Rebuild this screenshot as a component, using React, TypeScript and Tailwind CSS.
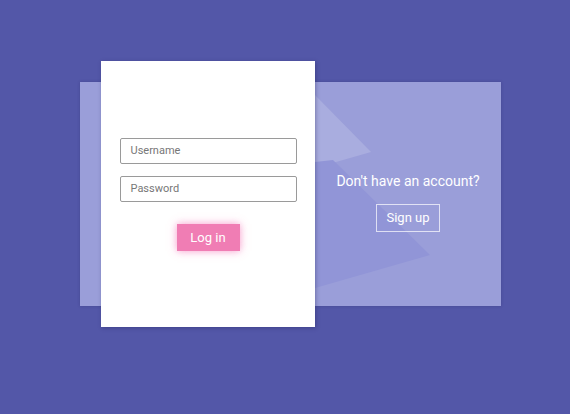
export default function App() {
  return (
    <div
      className="min-h-[414px] w-full bg-[#5357a8] pt-[82px] pl-[80px]"
      style={{ fontFamily: 'Roboto, "Liberation Sans", sans-serif' }}
    >
      <div className="relative flex h-[224px] w-[421px] bg-[#9a9ed9] shadow-[0_0_3px_rgba(40,40,100,0.3)]">
        <svg
          className="absolute inset-0"
          width="421"
          height="224"
          viewBox="0 0 421 224"
        >
          <polygon points="235,13 291,70 235,86" fill="#a9addf" />
          <polygon points="235,80 253,78 350,173 235,206" fill="#9195d7" />
        </svg>

        <div className="relative z-10 ml-[21px] -mt-[21px] flex h-[266px] w-[214px] shrink-0 flex-col items-center bg-white pt-[77px] shadow-[1px_1px_4px_rgba(30,30,80,0.35)]">
          <div className="flex h-[26px] w-[177px] items-center rounded-[2px] border border-[#9a9a9a] px-[10px] pt-[1px] text-[11px] text-[#777]">
            Username
          </div>
          <div className="mt-[12px] flex h-[26px] w-[177px] items-center rounded-[2px] border border-[#9a9a9a] px-[10px] pt-[1px] text-[11px] text-[#777]">
            Password
          </div>
          <button className="mt-[22px] h-[27px] w-[63px] bg-[#f07db4] text-[13px] text-white shadow-[0_0_8px_rgba(245,110,180,0.7)]">
            Log in
          </button>
        </div>

        <div className="relative z-10 flex flex-1 flex-col items-center pt-[89px]">
          <div className="text-[14px] leading-[20px] text-white">Don't have an account?</div>
          <button className="mt-[13px] h-[28px] w-[64px] border border-white/70 text-[13px] text-white">
            Sign up
          </button>
        </div>
      </div>
    </div>
  );
}
